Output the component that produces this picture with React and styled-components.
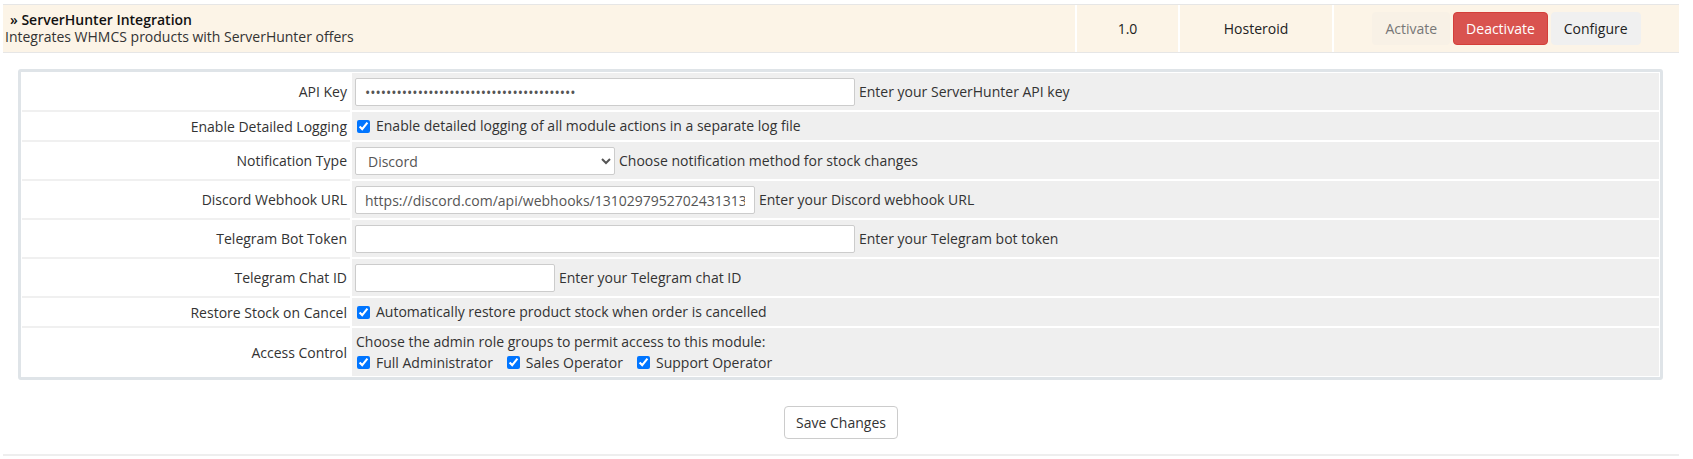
import styled, { createGlobalStyle } from "styled-components";

const GlobalStyle = createGlobalStyle`
    body {
        margin: 0;
        background: #fff;
        font-family: "Open Sans", "Liberation Sans", sans-serif;
        font-size: 14px;
        color: #333;
    }
`

const Page = styled.div`
    padding: 4px 14px 0 3px;
`

const ModuleRow = styled.div`
    display: grid;
    grid-template-columns: 1072px 101px 152px 1fr;
    column-gap: 2px;
    border-top: 1px solid #e6e6e6;
    border-bottom: 1px solid #e6e6e6;
    background: #fff;
`

const Cell = styled.div`
    height: 47px;
    background: #fcf4e7;
    display: flex;
    align-items: center;
    justify-content: ${props => props.$align || "center"};
    font-size: 14px;
    color: #222;
`

const InfoCell = styled(Cell)`
    flex-direction: column;
    align-items: flex-start;
    justify-content: center;
    padding-left: 2px;
`

const Titulo = styled.div`
    font-weight: 600;
    font-size: 14px;
    line-height: 17px;
    color: #111;
    padding-left: 5px;
`

const Descricao = styled.div`
    font-size: 14px;
    line-height: 18px;
    color: #333;
`

const Acoes = styled.div`
    display: flex;
    gap: 3px;
`

const cores = {
    muted: { bg: "#f8f1e6", border: "#f8f1e6", color: "#777" },
    danger: { bg: "#d9534f", border: "#d43f3a", color: "#fff" },
    light: { bg: "#f0f0f0", border: "#f0f0f0", color: "#222" },
}

const Botao = styled.button`
    height: 33px;
    padding: 0 12px;
    border-radius: 4px;
    font-family: "Open Sans", "Liberation Sans", sans-serif;
    font-size: 14px;
    background: ${props => cores[props.$variant].bg};
    border: 1px solid ${props => cores[props.$variant].border};
    color: ${props => cores[props.$variant].color};
`

const Painel = styled.div`
    margin: 16px 16px 0 15px;
    border: 3px solid #dfe4e8;
    border-radius: 3px;
    padding: 1px;
`

const Linha = styled.div`
    display: grid;
    grid-template-columns: 328px 1fr;
    column-gap: 2px;

    &:last-child > * {
        border-bottom: 0;
    }
`

const Rotulo = styled.div`
    display: flex;
    align-items: center;
    justify-content: flex-end;
    padding-right: 3px;
    background: #fff;
    border-bottom: 2px solid #f0f0f0;
`

const Campo = styled.div`
    background: #efefef;
    border-bottom: 2px solid #fff;
    padding: ${props => (props.$tipo === "input" ? "5px 3px 4px" : "3px 4px")};
    display: ${props => (props.$tipo === "bloco" ? "block" : "flex")};
    align-items: center;
    line-height: ${props => (props.$tipo === "bloco" ? "21px" : "22px")};
`

const Entrada = styled.input`
    box-sizing: border-box;
    width: ${props => props.$largura}px;
    height: 28px;
    border: 1px solid #ccc;
    border-radius: 2px;
    padding: 0 9px;
    font-family: "Open Sans", "Liberation Sans", sans-serif;
    font-size: 14px;
    color: #555;
    background: #fff;
`

const Selecao = styled.select`
    box-sizing: border-box;
    width: 260px;
    height: 28px;
    border: 1px solid #ccc;
    border-radius: 2px;
    padding: 0 8px;
    font-family: "Open Sans", "Liberation Sans", sans-serif;
    font-size: 14px;
    color: #555;
    background: #fff;
`

const Dica = styled.span`
    margin-left: 4px;
`

const Caixa = styled.input`
    width: 13px;
    height: 13px;
    margin: 0 6px 0 1px;
    accent-color: #0075ff;
`

const Opcoes = styled.div`
    display: flex;
    align-items: center;
`

const Opcao = styled.label`
    display: flex;
    align-items: center;
    margin-right: 13px;
`

const Rodape = styled.div`
    display: flex;
    justify-content: center;
    padding: 26px 0 15px;
    border-bottom: 2px solid #eee;
`

const BotaoSalvar = styled.button`
    height: 33px;
    padding: 0 11px;
    background: #fff;
    border: 1px solid #ccc;
    border-radius: 4px;
    font-family: "Open Sans", "Liberation Sans", sans-serif;
    font-size: 14px;
    color: #333;
`

export default function App() {
    return (
        <>
            <GlobalStyle />
            <Page>
                <ModuleRow>
                    <InfoCell>
                        <Titulo>» ServerHunter Integration</Titulo>
                        <Descricao>Integrates WHMCS products with ServerHunter offers</Descricao>
                    </InfoCell>
                    <Cell>1.0</Cell>
                    <Cell>Hosteroid</Cell>
                    <Cell>
                        <Acoes>
                            <Botao $variant="muted">Activate</Botao>
                            <Botao $variant="danger">Deactivate</Botao>
                            <Botao $variant="light">Configure</Botao>
                        </Acoes>
                    </Cell>
                </ModuleRow>

                <Painel>
                    <Linha>
                        <Rotulo>API Key</Rotulo>
                        <Campo $tipo="input">
                            <Entrada type="password" $largura={500} defaultValue="sh_live_0123456789abcdefghijklmnopqrstuv" />
                            <Dica>Enter your ServerHunter API key</Dica>
                        </Campo>
                    </Linha>
                    <Linha>
                        <Rotulo>Enable Detailed Logging</Rotulo>
                        <Campo>
                            <Caixa type="checkbox" defaultChecked />
                            Enable detailed logging of all module actions in a separate log file
                        </Campo>
                    </Linha>
                    <Linha>
                        <Rotulo>Notification Type</Rotulo>
                        <Campo $tipo="input">
                            <Selecao defaultValue="discord">
                                <option value="discord">Discord</option>
                                <option value="telegram">Telegram</option>
                            </Selecao>
                            <Dica>Choose notification method for stock changes</Dica>
                        </Campo>
                    </Linha>
                    <Linha>
                        <Rotulo>Discord Webhook URL</Rotulo>
                        <Campo $tipo="input">
                            <Entrada $largura={400} defaultValue="https://discord.com/api/webhooks/1310297952702431313/abcdef" />
                            <Dica>Enter your Discord webhook URL</Dica>
                        </Campo>
                    </Linha>
                    <Linha>
                        <Rotulo>Telegram Bot Token</Rotulo>
                        <Campo $tipo="input">
                            <Entrada $largura={500} defaultValue="" />
                            <Dica>Enter your Telegram bot token</Dica>
                        </Campo>
                    </Linha>
                    <Linha>
                        <Rotulo>Telegram Chat ID</Rotulo>
                        <Campo $tipo="input">
                            <Entrada $largura={200} defaultValue="" />
                            <Dica>Enter your Telegram chat ID</Dica>
                        </Campo>
                    </Linha>
                    <Linha>
                        <Rotulo>Restore Stock on Cancel</Rotulo>
                        <Campo>
                            <Caixa type="checkbox" defaultChecked />
                            Automatically restore product stock when order is cancelled
                        </Campo>
                    </Linha>
                    <Linha>
                        <Rotulo>Access Control</Rotulo>
                        <Campo $tipo="bloco">
                            <div>Choose the admin role groups to permit access to this module:</div>
                            <Opcoes>
                                <Opcao><Caixa type="checkbox" defaultChecked />Full Administrator</Opcao>
                                <Opcao><Caixa type="checkbox" defaultChecked />Sales Operator</Opcao>
                                <Opcao><Caixa type="checkbox" defaultChecked />Support Operator</Opcao>
                            </Opcoes>
                        </Campo>
                    </Linha>
                </Painel>

                <Rodape>
                    <BotaoSalvar>Save Changes</BotaoSalvar>
                </Rodape>
            </Page>
        </>
    )
}
